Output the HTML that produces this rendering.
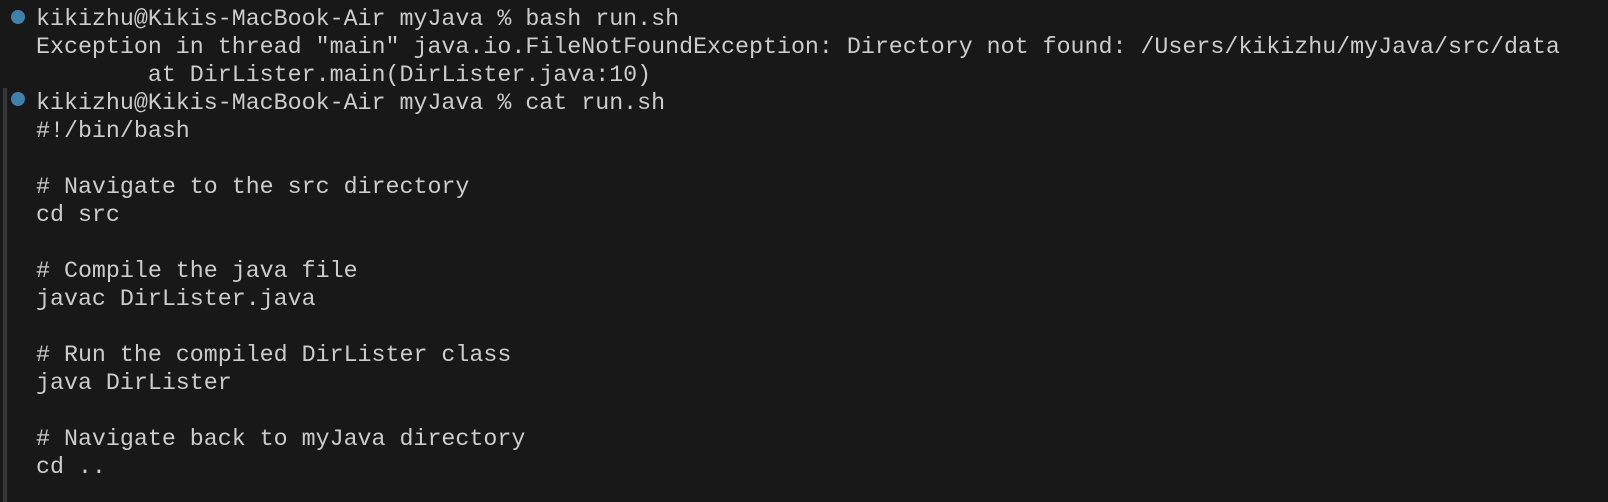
<!DOCTYPE html>
<html><head><style>
html,body{margin:0;padding:0;width:1608px;height:502px;background:#181818;overflow:hidden;}
.bar{position:absolute;left:3px;top:88px;width:4px;height:414px;background:#37373a;}
.dot{position:absolute;left:11px;width:14px;height:14px;border-radius:50%;background:#3f80ad;}
.l{position:absolute;left:36px;margin:0;white-space:pre;font-family:"Liberation Mono","DejaVu Sans Mono",monospace;font-size:23.3px;line-height:28px;color:#cccccc;}
</style></head><body>
<div class="bar"></div>
<div class="dot" style="top:10px"></div>
<div class="dot" style="top:92px"></div>
<div class="l" style="top:5px">kikizhu@Kikis-MacBook-Air myJava % bash run.sh</div>
<div class="l" style="top:33px">Exception in thread "main" java.io.FileNotFoundException: Directory not found: /Users/kikizhu/myJava/src/data</div>
<div class="l" style="top:61px">        at DirLister.main(DirLister.java:10)</div>
<div class="l" style="top:89px">kikizhu@Kikis-MacBook-Air myJava % cat run.sh</div>
<div class="l" style="top:117px">#!/bin/bash</div>
<div class="l" style="top:173px"># Navigate to the src directory</div>
<div class="l" style="top:201px">cd src</div>
<div class="l" style="top:257px"># Compile the java file</div>
<div class="l" style="top:285px">javac DirLister.java</div>
<div class="l" style="top:341px"># Run the compiled DirLister class</div>
<div class="l" style="top:369px">java DirLister</div>
<div class="l" style="top:425px"># Navigate back to myJava directory</div>
<div class="l" style="top:453px">cd ..</div>
</body></html>
